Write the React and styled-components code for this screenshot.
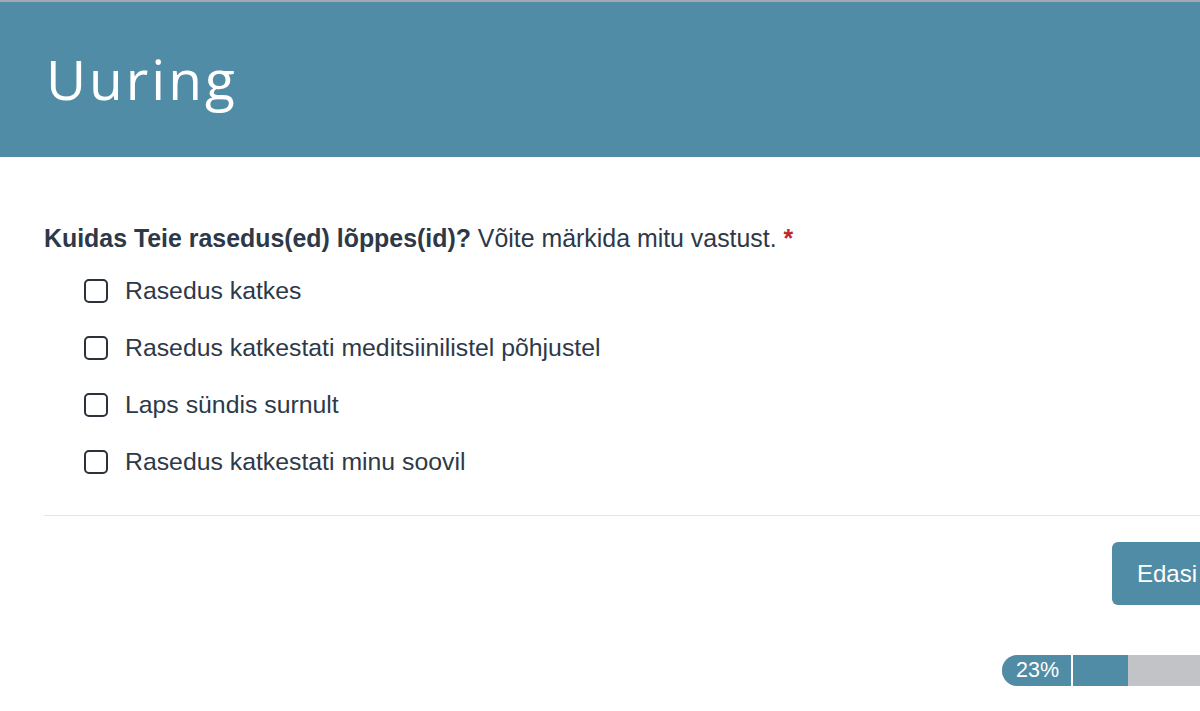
import styled, { createGlobalStyle } from "styled-components";

const GlobalStyle = createGlobalStyle`
  html, body {
    margin: 0;
    padding: 0;
    background: #ffffff;
    overflow: hidden;
  }
  body {
    font-family: "Liberation Sans", Arial, sans-serif;
    color: #2d3948;
  }
`;

const options = [
  "Rasedus katkes",
  "Rasedus katkestati meditsiinilistel põhjustel",
  "Laps sündis surnult",
  "Rasedus katkestati minu soovil",
];

export default function App() {
  return (
    <Page>
      <GlobalStyle />
      <Header>
        <Title>Uuring</Title>
      </Header>
      <Main>
        <Question>
          <b>Kuidas Teie rasedus(ed) lõppes(id)?</b> Võite märkida mitu vastust.{" "}
          <Required>*</Required>
        </Question>
        <Options>
          {options.map((opt) => (
            <Option key={opt}>
              <Box type="checkbox" />
              <span>{opt}</span>
            </Option>
          ))}
        </Options>
        <Divider />
        <Footer>
          <NextButton>Edasi</NextButton>
        </Footer>
        <ProgressRow>
          <Progress>
            <ProgressLabel>23%</ProgressLabel>
            <ProgressFill />
          </Progress>
        </ProgressRow>
      </Main>
    </Page>
  );
}

const Page = styled.div`
  width: 1260px;
  min-height: 711px;
  border-top: 2px solid #a3a8ae;
`;

const Header = styled.header`
  background-color: #518ca6;
  height: 155px;
  display: flex;
  align-items: center;
  padding: 0 46px;
`;

const Title = styled.h1`
  margin: 0 0 2px 0;
  font-family: "Open Sans", sans-serif;
  font-weight: 400;
  font-size: 55px;
  letter-spacing: 3px;
  color: #ffffff;
`;

const Main = styled.main`
  padding: 67px 44px 0 44px;
`;

const Question = styled.p`
  margin: 0;
  font-size: 24.9px;
  line-height: 28px;
  b {
    font-weight: 700;
  }
`;

const Required = styled.span`
  color: #c0282d;
  font-weight: 700;
`;

const Options = styled.div`
  display: flex;
  flex-direction: column;
  gap: 29px;
  padding: 25px 0 0 40px;
`;

const Option = styled.label`
  display: flex;
  align-items: center;
  gap: 17px;
  font-size: 24.8px;
  line-height: 28px;
`;

const Box = styled.input`
  appearance: none;
  margin: 0;
  width: 24px;
  height: 24px;
  border: 2px solid #2b323c;
  border-radius: 5px;
  box-sizing: border-box;
  background: #ffffff;
`;

const Divider = styled.hr`
  margin: 39px 0 0 0;
  border: none;
  border-top: 1px solid #e3e5e8;
`;

const Footer = styled.div`
  display: flex;
  justify-content: flex-end;
  padding-top: 26px;
`;

const NextButton = styled.button`
  width: 104px;
  height: 63px;
  border: none;
  border-radius: 6px;
  background-color: #518ca6;
  color: #ffffff;
  font-family: "Liberation Sans", Arial, sans-serif;
  font-size: 24px;
  text-align: left;
  padding: 0 0 0 25px;
`;

const ProgressRow = styled.div`
  display: flex;
  justify-content: flex-end;
  padding-top: 50px;
`;

const Progress = styled.div`
  width: 214px;
  height: 31px;
  display: flex;
  background-color: #c1c3c7;
  border-radius: 16px 0 0 16px;
  overflow: hidden;
`;

const ProgressLabel = styled.div`
  width: 71px;
  background-color: #518ca6;
  color: #ffffff;
  font-size: 21.5px;
  line-height: 31px;
  padding-left: 14px;
  box-sizing: border-box;
  border-right: 2px solid #ffffff;
`;

const ProgressFill = styled.div`
  width: 55px;
  background-color: #518ca6;
`;
